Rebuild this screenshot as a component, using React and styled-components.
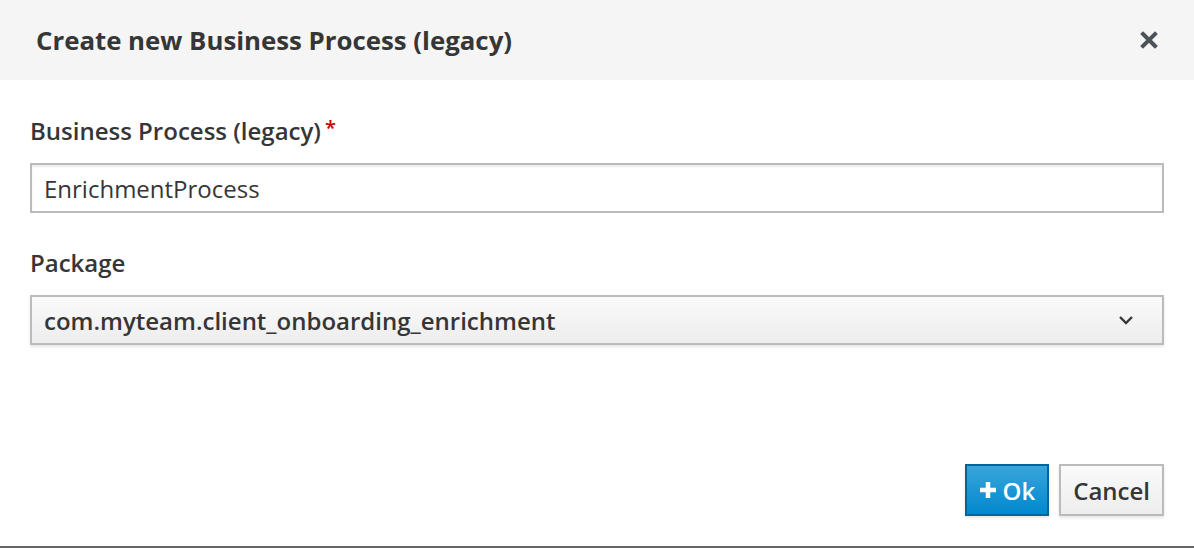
import React from 'react';
import styled, { createGlobalStyle } from 'styled-components';

const GlobalStyle = createGlobalStyle`
  html, body {
    margin: 0;
    padding: 0;
    background: #fff;
  }
  body {
    font-family: "Open Sans", "Liberation Sans", sans-serif;
    color: #363636;
  }
`;

const Modal = styled.div`
  width: 1194px;
  height: 548px;
  box-sizing: border-box;
  display: flex;
  flex-direction: column;
  border-bottom: 2px solid #666;
`;

const Header = styled.div`
  height: 80px;
  flex: none;
  background: #f5f5f5;
  display: flex;
  align-items: center;
  justify-content: space-between;
  padding: 0 36px;
`;

const Title = styled.h4`
  margin: 0;
  font-size: 25.8px;
  font-weight: 700;
  color: #363636;
`;

const CloseButton = styled.button`
  border: 0;
  background: none;
  padding: 0;
  display: flex;
  cursor: pointer;
`;

const Body = styled.div`
  flex: 1;
  padding: 35px 30px 0;
  display: flex;
  flex-direction: column;
`;

const FormGroup = styled.div`
  display: flex;
  flex-direction: column;
  margin-bottom: ${(p) => p.$gap || 0}px;
`;

const Label = styled.label`
  display: block;
  font-size: 24px;
  font-weight: 600;
  line-height: 32px;
  height: 32px;
  margin-bottom: 16px;
  color: #363636;
`;

const Required = styled.span`
  color: #c00;
  font-size: 20px;
  line-height: 20px;
  vertical-align: top;
  position: relative;
  top: 3px;
  margin-left: 4px;
`;

const Input = styled.input`
  box-sizing: border-box;
  height: 50px;
  margin: 0;
  border: 2px solid #bbb;
  box-shadow: inset 0 2px 2px rgba(3, 3, 3, 0.08);
  padding: 0 12px;
  font-family: inherit;
  font-size: 24px;
  color: #363636;
  outline: none;
`;

const Select = styled.div`
  box-sizing: border-box;
  height: 50px;
  border: 2px solid #bbb;
  background: linear-gradient(to bottom, #fafafa 0%, #ededed 100%);
  box-shadow: 0 2px 3px rgba(3, 3, 3, 0.1);
  padding: 0 28px 0 12px;
  display: flex;
  align-items: center;
  justify-content: space-between;
  font-size: 24px;
  font-weight: 600;
  color: #363636;
`;

const Footer = styled.div`
  display: flex;
  justify-content: flex-end;
  gap: 10px;
  padding: 0 30px 30px;
`;

const Button = styled.button`
  box-sizing: border-box;
  height: 52px;
  padding: 0 12px;
  border: 2px solid ${(p) => (p.$primary ? '#00659c' : '#bbb')};
  background: ${(p) =>
    p.$primary
      ? 'linear-gradient(to bottom, #39a5dc 0%, #0088ce 100%)'
      : 'linear-gradient(to bottom, #fafafa 0%, #ededed 100%)'};
  color: ${(p) => (p.$primary ? '#fff' : '#363636')};
  box-shadow: 0 2px 3px rgba(3, 3, 3, 0.1);
  font-family: inherit;
  font-size: 24px;
  font-weight: 600;
  display: flex;
  align-items: center;
  gap: 6px;
  cursor: pointer;
`;

function CloseIcon() {
  return (
    <svg width="18" height="18" viewBox="0 0 18 18">
      <path d="M3 3 L15 15 M15 3 L3 15" stroke="#4d5258" strokeWidth="4" strokeLinecap="square" />
    </svg>
  );
}

function Chevron() {
  return (
    <svg width="16" height="10" viewBox="0 0 16 10">
      <path d="M2 2 L8 8 L14 2" stroke="#363636" strokeWidth="2.4" fill="none" />
    </svg>
  );
}

function Plus() {
  return (
    <svg width="18" height="18" viewBox="0 0 18 18">
      <path d="M9 1 V17 M1 9 H17" stroke="#fff" strokeWidth="4.5" />
    </svg>
  );
}

export default function App() {
  return (
    <>
      <GlobalStyle />
      <Modal>
        <Header>
          <Title>Create new Business Process (legacy)</Title>
          <CloseButton aria-label="Close">
            <CloseIcon />
          </CloseButton>
        </Header>
        <Body>
          <FormGroup $gap={34}>
            <Label>
              Business Process (legacy)<Required>*</Required>
            </Label>
            <Input defaultValue="EnrichmentProcess" />
          </FormGroup>
          <FormGroup>
            <Label>Package</Label>
            <Select>
              <span>com.myteam.client_onboarding_enrichment</span>
              <Chevron />
            </Select>
          </FormGroup>
        </Body>
        <Footer>
          <Button $primary>
            <Plus />
            Ok
          </Button>
          <Button>Cancel</Button>
        </Footer>
      </Modal>
    </>
  );
}
